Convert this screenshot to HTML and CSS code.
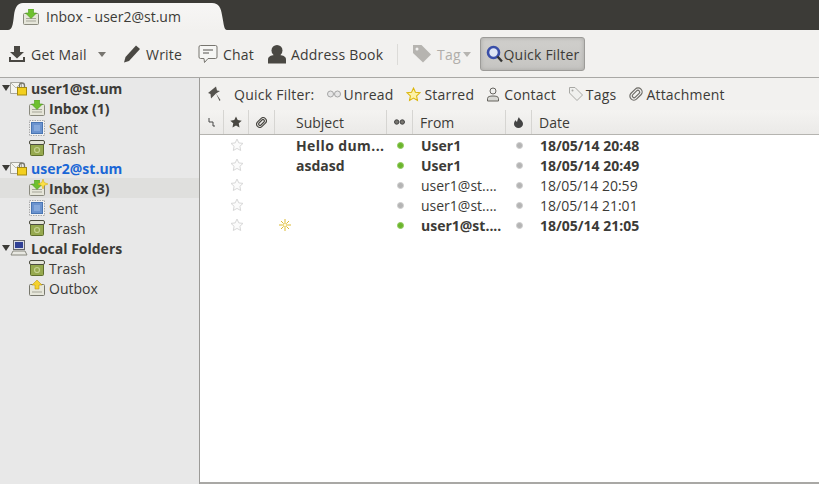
FILE: index.html
```html
<!DOCTYPE html>
<html lang="en">
<head>
    <meta charset="UTF-8">
    <meta name="viewport" content="width=device-width, initial-scale=1.0">
    <title>Inbox - user2@st.um</title>
    <link rel="stylesheet" href="styles.css">
</head>
<body>

    <svg class="defs" width="0" height="0">
        <symbol id="inbox" viewBox="0 0 16 16">
            <rect x="0.5" y="4.5" width="15" height="11" rx="1" fill="#e6e6da" stroke="#8a8a7e"/>
            <path d="M3 9.5h10M3 12h10" stroke="#a5a598" fill="none"/>
            <path d="M5.5 0h5v4h3L8 9.5 2.500 4h3z" fill="#6fc02f" stroke="#4c9a1c" stroke-width="0.6"/>
        </symbol>
        <symbol id="sent" viewBox="0 0 16 16">
            <rect x="0.5" y="0.5" width="15" height="15" fill="#f2f2f2" stroke="#a8a8a8" stroke-dasharray="1.500 1"/>
            <rect x="2.500" y="2.500" width="11" height="11" fill="#6b93cf" stroke="#4a76b3"/>
            <rect x="5" y="5" width="6" height="6" fill="#86a9dc"/>
        </symbol>
        <symbol id="trash" viewBox="0 0 16 16">
            <rect x="1.500" y="4" width="13" height="11.500" rx="1" fill="#96a94f" stroke="#5f6e2c"/>
            <rect x="0.500" y="0.500" width="15" height="4" rx="1.500" fill="#e4e4d8" stroke="#4c4c40"/>
            <circle cx="8" cy="10" r="2.500" fill="none" stroke="#c5d292" stroke-width="1.200"/>
        </symbol>
        <symbol id="outbox" viewBox="0 0 16 16">
            <rect x="0.500" y="4.500" width="15" height="11" rx="1" fill="#e6e6da" stroke="#77776c"/>
            <path d="M3 12h10" stroke="#a5a598"/>
            <path d="M8 0l5 5h-3v4H6V5H3z" fill="#f5d22e" stroke="#c09b12" stroke-width="0.600"/>
        </symbol>
        <symbol id="account" viewBox="0 0 18 16">
            <path d="M0.500 2.500h11v11h-11z" fill="#f4f4ef" stroke="#a8a8a0"/>
            <path d="M1 3l5 5 5-5" fill="none" stroke="#b8b8b0"/>
            <rect x="7.500" y="7.500" width="9" height="7.500" fill="#f3cf1e" stroke="#a58b10"/>
            <path d="M9.500 7.500V5.500a2.500 2.500 0 0 1 5 0v2" fill="none" stroke="#77776c" stroke-width="1.300"/>
        </symbol>
        <symbol id="star" viewBox="0 0 14 14">
            <path d="M7 1l1.800 3.900 4.200.5-3.100 2.900.8 4.200L7 10.400l-3.700 2.100.8-4.200L1 5.400l4.200-.5z" fill="#fbfbfb" stroke="#d8d8d8"/>
        </symbol>
    </svg>

    <div class="tabbar">
        <div class="tab">
            <svg class="ico16"><use href="#inbox"/></svg>
            <span>Inbox - user2@st.um</span>
        </div>
    </div>

    <div class="toolbar">
        <div class="tool getmail">
            <svg width="18" height="18" viewBox="0 0 18 18"><path d="M6 1h6v6h4l-7 6.500L2 7h4z" fill="#4a4843"/><path d="M1 12v5h16v-5h-2v3H3v-3z" fill="#4a4843"/></svg>
            <span>Get Mail</span>
            <i class="caret"></i>
        </div>
        <div class="tool write">
            <svg width="18" height="18" viewBox="0 0 18 18"><path d="M13 0.500l4 3.500L6 16l-5 1.500L2.500 12z" fill="#4a4843"/></svg>
            <span>Write</span>
        </div>
        <div class="tool chat">
            <svg width="20" height="20" viewBox="0 0 20 20"><path d="M2.500 1.500h15a1.500 1.500 0 0 1 1.500 1.500v10a1.500 1.500 0 0 1-1.500 1.500H10l-3.500 4-.5-4H2.500A1.500 1.500 0 0 1 1 13V3a1.500 1.500 0 0 1 1.500-1.500z" fill="#f6f6f4" stroke="#77756f"/><path d="M5 6h10M5 9h6" stroke="#55534e" stroke-width="1.200"/></svg>
            <span>Chat</span>
        </div>
        <div class="tool book">
            <svg width="20" height="20" viewBox="0 0 20 20"><circle cx="10" cy="6.500" r="5.500" fill="#4a4843"/><path d="M1 19.500v-4c0-3 3-4 6-4.500h6c3 .5 6 1.500 6 4.500v4z" fill="#4a4843"/></svg>
            <span>Address Book</span>
        </div>
        <div class="sep"></div>
        <div class="tool tag">
            <svg width="20" height="20" viewBox="0 0 20 20"><path d="M1 1h8.500L19 10.500 11 18.500 1 9z" fill="#b6b4b0"/><circle cx="5" cy="5" r="1.500" fill="#f2f1ef"/></svg>
            <span>Tag</span>
            <i class="caret caret-dim"></i>
        </div>
        <div class="tool qfbtn">
            <svg width="17" height="18" viewBox="0 0 17 18"><circle cx="7.500" cy="7.500" r="5.500" fill="#dfe6f5" stroke="#3a4fa8" stroke-width="2.600"/><path d="M11.500 11.500l4.500 5" stroke="#333" stroke-width="2.400"/></svg>
            <span>Quick Filter</span>
        </div>
    </div>

    <div class="main">
        <aside class="sidebar">
            <div class="folder account"><i class="twist"></i><svg class="ico-acc"><use href="#account"/></svg><span>user1@st.um</span></div>
            <div class="folder sub bold"><svg class="ico16"><use href="#inbox"/></svg><span>Inbox (1)</span></div>
            <div class="folder sub"><svg class="ico16"><use href="#sent"/></svg><span>Sent</span></div>
            <div class="folder sub"><svg class="ico16"><use href="#trash"/></svg><span>Trash</span></div>
            <div class="folder account blue"><i class="twist"></i><svg class="ico-acc"><use href="#account"/></svg><span>user2@st.um</span></div>
            <div class="folder sub bold selected">
                <span class="icon-wrap">
                    <svg class="ico16"><use href="#inbox"/></svg>
                    <svg class="newmail" width="10" height="10" viewBox="0 0 10 10"><path d="M5 0l1.200 3.500L10 5 6.200 6.500 5 10 3.800 6.500 0 5l3.800-1.500z" fill="#fbe14a" stroke="#d4a900" stroke-width="0.500"/></svg>
                </span>
                <span>Inbox (3)</span>
            </div>
            <div class="folder sub"><svg class="ico16"><use href="#sent"/></svg><span>Sent</span></div>
            <div class="folder sub"><svg class="ico16"><use href="#trash"/></svg><span>Trash</span></div>
            <div class="folder account local">
                <i class="twist"></i>
                <svg class="ico-acc" viewBox="0 0 18 16"><rect x="3.500" y="0.500" width="11" height="9" fill="#d9dce6" stroke="#66666a"/><rect x="5" y="2" width="8" height="6" fill="#2f3f95"/><path d="M1 15l2-4h12l2 4z" fill="#e8e8e2" stroke="#88887f"/></svg>
                <span>Local Folders</span>
            </div>
            <div class="folder sub"><svg class="ico16"><use href="#trash"/></svg><span>Trash</span></div>
            <div class="folder sub"><svg class="ico16"><use href="#outbox"/></svg><span>Outbox</span></div>
        </aside>

        <section class="content">
            <div class="qfbar">
                <svg class="pin" width="14" height="16" viewBox="0 0 14 16"><path transform="translate(14 0) scale(-1 1)" d="M5 0.500l8 6.500-2.500 1-.5 4.500-5-5-3.500 7.500-1-1 4.500-6.500L1 5l3-.5z" fill="#55534e"/></svg>
                <span class="qflabel">Quick Filter:</span>
                <div class="qf unread">
                    <svg width="14" height="8" viewBox="0 0 14 8"><circle cx="3.500" cy="4" r="3" fill="#e6e6e6" stroke="#a4a4a4"/><circle cx="10.500" cy="4" r="3" fill="#e6e6e6" stroke="#a4a4a4"/></svg>
                    <span>Unread</span>
                </div>
                <div class="qf starred">
                    <svg width="15" height="15" viewBox="0 0 14 14"><path d="M7 1l1.800 3.900 4.200.5-3.100 2.900.8 4.200L7 10.400l-3.700 2.100.8-4.200L1 5.400l4.200-.5z" fill="#fdf2a6" stroke="#dcb70f"/></svg>
                    <span>Starred</span>
                </div>
                <div class="qf contact">
                    <svg width="12" height="15" viewBox="0 0 12 15"><circle cx="6" cy="4" r="3" fill="#f0f0ee" stroke="#66645f"/><path d="M.5 14v-2.500C.5 9.500 3 9 6 9s5.500.5 5.500 2.500V14z" fill="#d8d8d4" stroke="#66645f"/></svg>
                    <span>Contact</span>
                </div>
                <div class="qf tags">
                    <svg width="14" height="14" viewBox="0 0 14 14"><path d="M.5.500h5.500l7.500 7.500-5.500 5.500L.5 6z" fill="#f0f0ee" stroke="#a8a8a4"/><circle cx="3.500" cy="3.500" r="1" fill="#a8a8a4"/></svg>
                    <span>Tags</span>
                </div>
                <div class="qf attach">
                    <svg width="14" height="14" viewBox="0 0 14 14"><g fill="none" stroke="#6e6c67" stroke-width="1.200" transform="rotate(45 7 7)"><rect x="3" y="0" width="8" height="14" rx="4"/><rect x="5.200" y="2.500" width="3.600" height="9" rx="1.800"/></g></svg>
                    <span>Attachment</span>
                </div>
            </div>

            <div class="thead grid">
                <div class="th">
                    <svg width="7" height="9" viewBox="0 0 7 9"><path d="M1 0v4M1 4h4v4M5 8h2" fill="none" stroke="#444"/></svg>
                </div>
                <div class="th">
                    <svg width="12" height="12" viewBox="0 0 14 14"><path d="M7 .500l2 4.300 4.700.6-3.500 3.200.9 4.700L7 11l-4.100 2.300.9-4.700L.3 5.400 5 4.800z" fill="#4a4843"/></svg>
                </div>
                <div class="th">
                    <svg width="11" height="11" viewBox="0 0 14 14"><g fill="none" stroke="#4a4843" stroke-width="1.500" transform="rotate(45 7 7)"><rect x="3" y="0" width="8" height="14" rx="4"/><rect x="5.200" y="2.500" width="3.600" height="9" rx="1.800"/></g></svg>
                </div>
                <div class="th th-text subject-head">Subject</div>
                <div class="th">
                    <svg width="11" height="6" viewBox="0 0 11 6"><circle cx="2.700" cy="3" r="2.200" fill="#77756f" stroke="#444"/><circle cx="8.300" cy="3" r="2.200" fill="#77756f" stroke="#444"/></svg>
                </div>
                <div class="th th-text">From</div>
                <div class="th">
                    <svg width="9" height="11" viewBox="0 0 9 11"><path d="M5 0c0 2 4 3.500 4 7a4.500 4 0 0 1-9 0c0-2 1-3 1.500-4 .3 1 1 1.500 1.500 2C3.500 3.500 3.800 1.500 5 0z" fill="#444"/></svg>
                </div>
                <div class="th th-text th-last">Date</div>
            </div>

            <div class="rows">
                <div class="row grid bold">
                    <div class="cell"></div>
                    <div class="cell"><svg class="ico-star"><use href="#star"/></svg></div>
                    <div class="cell"></div>
                    <div class="cell text subject wide">Hello dum...</div>
                    <div class="cell"><i class="dot green"></i></div>
                    <div class="cell text">User1</div>
                    <div class="cell"><i class="dot"></i></div>
                    <div class="cell text">18/05/14 20:48</div>
                </div>
                <div class="row grid bold">
                    <div class="cell"></div>
                    <div class="cell"><svg class="ico-star"><use href="#star"/></svg></div>
                    <div class="cell"></div>
                    <div class="cell text subject">asdasd</div>
                    <div class="cell"><i class="dot green"></i></div>
                    <div class="cell text">User1</div>
                    <div class="cell"><i class="dot"></i></div>
                    <div class="cell text">18/05/14 20:49</div>
                </div>
                <div class="row grid">
                    <div class="cell"></div>
                    <div class="cell"><svg class="ico-star"><use href="#star"/></svg></div>
                    <div class="cell"></div>
                    <div class="cell text subject"></div>
                    <div class="cell"><i class="dot"></i></div>
                    <div class="cell text">user1@st....</div>
                    <div class="cell"><i class="dot"></i></div>
                    <div class="cell text">18/05/14 20:59</div>
                </div>
                <div class="row grid">
                    <div class="cell"></div>
                    <div class="cell"><svg class="ico-star"><use href="#star"/></svg></div>
                    <div class="cell"></div>
                    <div class="cell text subject"></div>
                    <div class="cell"><i class="dot"></i></div>
                    <div class="cell text">user1@st....</div>
                    <div class="cell"><i class="dot"></i></div>
                    <div class="cell text">18/05/14 21:01</div>
                </div>
                <div class="row grid bold">
                    <div class="cell spark">
                        <svg width="12" height="12" viewBox="0 0 12 12"><path d="M6 0v3.500M6 8.500V12M0 6h3.500M8.500 6H12M2 2l2 2M8 8l2 2M10 2L8 4M2 10l2-2" stroke="#d4a900" stroke-width="0.800" fill="none"/><circle cx="6" cy="6" r="2" fill="#fffbe0" stroke="#d4a900" stroke-width="0.600"/></svg>
                    </div>
                    <div class="cell"><svg class="ico-star"><use href="#star"/></svg></div>
                    <div class="cell"></div>
                    <div class="cell text subject"></div>
                    <div class="cell"><i class="dot green"></i></div>
                    <div class="cell text">user1@st....</div>
                    <div class="cell"><i class="dot"></i></div>
                    <div class="cell text">18/05/14 21:05</div>
                </div>
            </div>
        </section>
    </div>

</body>
</html>
```

FILE: styles.css
```css
html, body {
    height: 100%;
}

body {
    margin: 0;
    padding: 0;
    font-family: "Open Sans", "Noto Sans", sans-serif;
    font-size: 14px;
    color: #3c3b37;
    background-color: #f2f1ef;
    display: flex;
    flex-direction: column;
    overflow: hidden;
}

.defs {
    position: absolute;
}

svg {
    display: block;
    flex: none;
}

.ico16 {
    width: 16px;
    height: 16px;
}

.ico-acc {
    width: 18px;
    height: 16px;
}

.ico-star {
    width: 14px;
    height: 14px;
}

/* tab strip */
.tabbar {
    height: 30px;
    background-color: #3c3b37;
    padding: 3px 0 0 8px;
    box-sizing: border-box;
}

.tab {
    width: 219px;
    height: 27px;
    background: linear-gradient(to bottom, #f7f6f5, #f2f1ef);
    clip-path: path("M0 27 C4 27 5 22 6 12 C7 5 9 0 15 0 L204 0 C211 0 213 5 214 12 C216 22 216 27 219 27 Z");
    display: flex;
    align-items: center;
    gap: 7px;
    padding-left: 15px;
    box-sizing: border-box;
    font-size: 14px;
}

/* main toolbar */
.toolbar {
    height: 48px;
    box-sizing: border-box;
    border-bottom: 1px solid #a9a8a5;
    display: flex;
    align-items: center;
    padding: 1px 0 0 8px;
}

.tool {
    display: flex;
    align-items: center;
    gap: 5px;
    font-size: 14px;
    letter-spacing: 0.2px;
}

.getmail {
    width: 115px;
}

.getmail .caret {
    margin-left: 6px;
}

.write {
    width: 75px;
}

.chat {
    width: 69px;
}

.book {
    width: 129px;
    gap: 4px;
}

.sep {
    width: 1px;
    height: 21px;
    background-color: #dcdbd8;
    margin: 0 14px 0 1px;
}

.tag {
    width: 68px;
    color: #b0aeaa;
}

.caret {
    width: 0;
    height: 0;
    border-left: 4px solid transparent;
    border-right: 4px solid transparent;
    border-top: 5px solid #77756f;
}

.caret-dim {
    border-top-color: #b6b4b0;
    margin-left: -3px;
}

.qfbtn {
    width: 105px;
    height: 34px;
    box-sizing: border-box;
    gap: 1px;
    justify-content: center;
    border: 1px solid #9c9b98;
    border-radius: 3px;
    background: linear-gradient(to bottom, #d0cfcc, #c6c5c2);
    box-shadow: inset 0 0 4px #a9a8a5;
}

/* below the toolbar */
.main {
    flex: 1;
    display: flex;
    min-height: 0;
}

.sidebar {
    width: 199px;
    flex: none;
    background-color: #e8e8e8;
    border-right: 1px solid #9c9b98;
}

.folder {
    height: 20px;
    display: flex;
    align-items: center;
    font-size: 14px;
}

.folder.account {
    font-weight: 700;
    padding-left: 2px;
}

.folder.account .ico-acc {
    margin-right: 3px;
}

.twist {
    width: 0;
    height: 0;
    border-left: 4px solid transparent;
    border-right: 4px solid transparent;
    border-top: 6px solid #3c3b37;
}

.folder.sub {
    padding-left: 29px;
    gap: 4px;
}

.bold {
    font-weight: 700;
}

.blue {
    color: #1a66d6;
}

.selected {
    background-color: #dfdfdd;
}

.icon-wrap {
    position: relative;
}

.newmail {
    position: absolute;
    top: -1px;
    right: -3px;
}

.content {
    flex: 1;
    min-width: 0;
    display: flex;
    flex-direction: column;
}

/* quick filter bar */
.qfbar {
    height: 32px;
    box-sizing: border-box;
    display: flex;
    align-items: center;
    padding-left: 7px;
    font-size: 14px;
    letter-spacing: 0.2px;
}

.pin {
    margin-right: 13px;
}

.qflabel {
    margin-right: 12px;
    letter-spacing: 0.25px;
}

.qf {
    display: flex;
    align-items: center;
    gap: 3px;
    margin-right: 13px;
}

.contact {
    gap: 5px;
}

/* thread pane */
.grid {
    display: grid;
    grid-template-columns: 24px 25px 26px 112px 26px 93px 26px 1fr;
}

.thead {
    height: 25px;
    box-sizing: border-box;
    background: linear-gradient(to bottom, #f4f3f1, #ebeae8);
    border-bottom: 1px solid #b5b4b0;
}

.th {
    display: flex;
    align-items: center;
    justify-content: center;
    border-right: 1px solid #d6d5d2;
}

.th-text {
    justify-content: flex-start;
    padding-left: 7px;
}

.subject-head {
    padding-left: 21px;
}

.th-last {
    border-right: none;
}

.rows {
    flex: 1;
    background-color: #fff;
    border-bottom: 2px solid #a9a8a5;
}

.row {
    height: 20px;
    font-size: 14px;
}

.cell {
    display: flex;
    align-items: center;
    justify-content: center;
    min-width: 0;
}

.cell.text {
    justify-content: flex-start;
    padding-left: 8px;
    white-space: nowrap;
}

.cell.subject {
    padding-left: 21px;
}

.wide {
    letter-spacing: 0.4px;
}

.spark {
    transform: translateX(73px);
}

.dot {
    width: 5px;
    height: 5px;
    border-radius: 50%;
    background-color: #b4b4b4;
    border: 1px solid #cfcfcf;
}

.dot.green {
    background-color: #6cb52d;
    border-color: #93cb61;
}
```
